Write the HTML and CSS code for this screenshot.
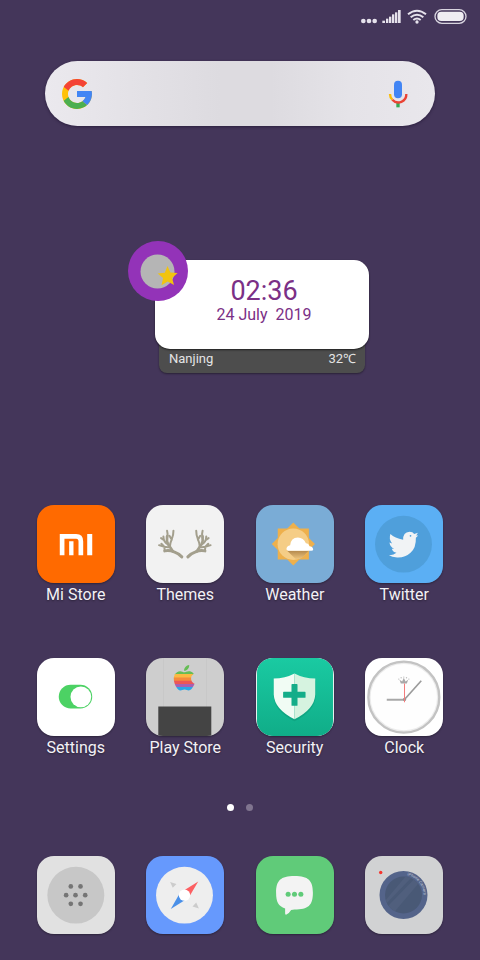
FILE: index.html
```html
<!DOCTYPE html>
<html lang="en">
<head>
<meta charset="utf-8">
<meta name="viewport" content="width=device-width, initial-scale=1">
<title>Home</title>
<link rel="stylesheet" href="styles.css">
</head>
<body>
<div class="home">
  <header class="status">
    <svg width="16" height="15" viewBox="65 27 48 45" aria-hidden="true"><g fill="#e6e2ec"><circle cx="72" cy="63" r="7"/><circle cx="89" cy="63" r="7"/><circle cx="106" cy="63" r="7"/></g></svg>
    <svg width="20" height="15" viewBox="128 27 60 45" aria-hidden="true"><g fill="#e6e2ec"><rect x="129" y="62" width="8" height="7"/><rect x="140" y="56" width="7" height="13"/><rect x="149" y="50" width="7" height="19"/><rect x="158" y="43" width="7" height="26"/><rect x="167" y="37" width="7" height="32"/><rect x="176" y="30" width="8" height="39"/></g></svg>
    <svg class="wifi" width="20" height="15" viewBox="203 27 60 45" aria-hidden="true"><g fill="none" stroke="#e6e2ec" stroke-width="6"><path d="M206 43Q233 21 260 43"/><path d="M214 52Q233 36 252 52"/><path d="M222 60Q233 51 244 60"/></g><circle cx="233" cy="66" r="5" fill="#e6e2ec"/></svg>
    <svg width="33" height="15" viewBox="283 27 99 45" aria-hidden="true"><rect x="286" y="29" width="93" height="41" rx="20.500" fill="none" stroke="#d8d4df" stroke-width="4"/><rect x="293" y="35" width="79" height="28" rx="12" fill="#efedf2"/></svg>
  </header>

  <form class="search">
    <svg width="36" height="36" viewBox="0 0 48 48" aria-hidden="true">
      <path fill="#ffc107" d="M43.611 20.083H42V20H24v8h11.303c-1.649 4.657-6.08 8-11.303 8c-6.627 0-12-5.373-12-12c0-6.627 5.373-12 12-12c3.059 0 5.842 1.154 7.961 3.039l5.657-5.657C34.046 6.053 29.268 4 24 4C12.955 4 4 12.955 4 24c0 11.045 8.955 20 20 20c11.045 0 20-8.955 20-20C44 22.659 43.862 21.35 43.611 20.083z"/>
      <path fill="#f44336" d="M6.306 14.691l6.571 4.819C14.655 15.108 18.961 12 24 12c3.059 0 5.842 1.154 7.961 3.039l5.657-5.657C34.046 6.053 29.268 4 24 4C16.318 4 9.656 8.337 6.306 14.691z"/>
      <path fill="#4caf50" d="M24 44c5.166 0 9.86-1.977 13.409-5.192l-6.19-5.238C29.211 35.091 26.715 36 24 36c-5.202 0-9.619-3.317-11.283-7.946l-6.522 5.025C9.505 39.556 16.227 44 24 44z"/>
      <path fill="#4285f4" d="M43.611 20.083H42V20H24v8h11.303c-.792 2.237-2.231 4.166-4.087 5.571l6.193 5.236C36.971 39.205 44 34 44 24C44 22.659 43.862 21.35 43.611 20.083z"/>
    </svg>
    <input class="search-input" type="search" aria-label="Search">
    <button class="mic" type="button" aria-label="Voice search">
      <svg width="20" height="28" viewBox="144 90 60 84" aria-hidden="true">
        <rect x="162" y="92" width="24" height="53" rx="12" fill="#4285f4"/>
        <rect x="169" y="156" width="10" height="16" fill="#34a853"/>
        <path d="M150 132A24 24 0 0 0 157 149" fill="none" stroke="#fbbc05" stroke-width="7"/>
        <path d="M157 149A24 24 0 0 0 199 132" fill="none" stroke="#ea4335" stroke-width="7"/>
      </svg>
    </button>
  </form>

  <section class="widget">
    <div class="card">
      <div class="time">02:36</div>
      <div class="date">24 July  2019</div>
    </div>
    <div class="weather"><span>Nanjing</span><span>32℃</span></div>
    <svg class="badge" width="60" height="60" viewBox="0 0 60 60" aria-hidden="true"><circle cx="30" cy="30" r="30" fill="#9333b8"/><circle cx="29.500" cy="30.500" r="17" fill="#b5b5b5"/><path d="M39.500 25l2.900 6.500 7.200.5-5.500 4.900 1.900 7-6.300-3.400-6.200 3.800 1.600-7.300-5.400-4.500 7.100-.7z" fill="#f1c40f"/></svg>
  </section>

  <main class="apps">
    <a class="app" href="#">
      <svg class="icon" viewBox="22 30 233 233" aria-hidden="true"><rect x="22" y="30" width="233" height="233" fill="#ff6a00"/><path d="M97 180V124H139Q153 124 153 139V180" fill="none" stroke="#fff" stroke-width="14"/><path d="M118 138h13v42h-13zM172 117h15v63h-15z" fill="#fff"/></svg>
      <span>Mi Store</span>
    </a>
    <a class="app" href="#">
      <svg class="icon" viewBox="350 30 233 233" aria-hidden="true"><rect x="350" y="30" width="233" height="233" fill="#f2f2f2"/>
        <defs><g id="antler" fill="none" stroke="#a39f8d" stroke-linecap="round" stroke-linejoin="round"><path d="M457 185Q446 174 434 170Q420 164 406 167" stroke-width="9"/><path d="M430 168Q424 158 416 147Q411 138 413 124" stroke-width="8"/><path d="M413 128Q416 115 413 107M421 156Q422 143 427 132Q432 121 432 107M427 134L420 122M416 148Q402 140 402 124M404 135L395 129M420 156Q404 157 389 150M404 154L396 146M406 166L405 158" stroke-width="6"/></g></defs>
        <use href="#antler"/><use href="#antler" transform="translate(932 0) scale(-1 1)"/></svg>
      <span>Themes</span>
    </a>
    <a class="app" href="#">
      <svg class="icon" viewBox="33 30 233 233" aria-hidden="true"><defs><linearGradient id="shade" x1="0" y1="0" x2="0" y2="1"><stop offset="0" stop-color="#b58a4d"/><stop offset="1" stop-color="#efc67e"/></linearGradient></defs><rect x="33" y="30" width="233" height="233" fill="#7aacd6"/><path d="M98 100h93v93H98z" fill="#eeb04c"/><path d="M144.500 82L209 146.500 144.500 211 80 146.500z" fill="#eeb04c"/><circle cx="144.500" cy="147" r="47" fill="#f5cd86"/><path d="M126 167H190L183 174Q170 194 152 192z" fill="url(#shade)"/><path d="M133 167Q124 167 124 161Q125 152 135 150Q137 128 158 127Q175 128 182 144Q190 144 193 153Q202 153 204 162Q204 167 198 167z" fill="#fff"/></svg>
      <span>Weather</span>
    </a>
    <a class="app" href="#">
      <svg class="icon" viewBox="361 30 233 233" aria-hidden="true"><rect x="361" y="30" width="233" height="233" fill="#5baff4"/><circle cx="476" cy="147" r="85" fill="#4f9fdb"/><path d="M437 117Q450 130 475 134Q474 112 494 110Q504 110 508 117L519 113L514 121L520 121L513 128Q514 158 497 173Q481 188 457 187Q442 186 432 180Q446 181 455 173Q444 171 441 161L448 161Q436 155 434 142L442 145Q431 132 437 117z" fill="#f1f3f5"/><circle cx="497" cy="122" r="2.500" fill="#4f9fdb"/></svg>
      <span>Twitter</span>
    </a>
    <a class="app" href="#">
      <svg class="icon" viewBox="22 25 233 233" aria-hidden="true"><rect x="22" y="25" width="233" height="233" fill="#fff"/><rect x="87" y="105" width="100" height="71" rx="35.500" fill="#4cd264"/><circle cx="153" cy="141" r="31" fill="#fff"/></svg>
      <span>Settings</span>
    </a>
    <a class="app" href="#">
      <svg class="icon" viewBox="0 0 78 78" aria-hidden="true"><defs><clipPath id="fruit"><path transform="translate(25.400 7) scale(1.060)" d="M12.152 6.896c-.948 0-2.415-1.078-3.96-1.04-2.04.027-3.91 1.183-4.961 3.014-2.117 3.675-.546 9.103 1.519 12.09 1.013 1.454 2.208 3.09 3.792 3.039 1.52-.065 2.09-.987 3.935-.987 1.831 0 2.35.987 3.96.948 1.637-.026 2.676-1.48 3.676-2.948 1.156-1.688 1.636-3.325 1.662-3.415-.039-.013-3.182-1.221-3.22-4.857-.026-3.04 2.48-4.494 2.597-4.559-1.429-2.09-3.623-2.324-4.39-2.376-2-.156-3.675 1.09-4.61 1.09zM15.53 3.83c.843-1.012 1.4-2.427 1.245-3.83-1.207.052-2.662.805-3.532 1.818-.78.896-1.454 2.338-1.273 3.714 1.338.104 2.715-.688 3.559-1.701"/></clipPath></defs><rect width="78" height="78" fill="#cecece"/><path d="M17 0h1v49h-1zM60 0h1v49h-1z" fill="#c8c8c8"/><rect x="12.300" y="48.500" width="53" height="30" fill="#444"/><g clip-path="url(#fruit)"><path d="M25 6h26v11H25z" fill="#65bd55"/><path d="M25 16h26v4H25z" fill="#fbb943"/><path d="M25 19.500h26v3.500H25z" fill="#f58b3c"/><path d="M25 22.700h26v3.500H25z" fill="#ec5656"/><path d="M25 26h26v3H25z" fill="#a85fb2"/><path d="M25 29h26v5H25z" fill="#29a6e8"/></g></svg>
      <span>Play Store</span>
    </a>
    <a class="app" href="#">
      <svg class="icon" viewBox="33 25 233 233" aria-hidden="true"><defs><linearGradient id="green" x1="0" y1="0" x2="0" y2="1"><stop offset="0" stop-color="#1acaa2"/><stop offset="1" stop-color="#10ad88"/></linearGradient></defs><rect x="33" y="25" width="233" height="233" fill="#e4f3ef"/><rect x="36" y="25" width="227" height="233" rx="44" fill="url(#green)"/><path d="M148 78Q176 92 211 92V140Q209 184 148 214Q88 184 86 140V92Q120 92 148 78z" fill="#0c9474" opacity=".450"/><path d="M148 71Q120 86 86 86V134Q88 178 148 208z" fill="#f1fcf4"/><path d="M148 71Q176 86 210 86V134Q208 178 148 208z" fill="#d6f3e0"/><path d="M141 103h14q2 0 2 2v21h22q2 0 2 2v14q0 2-2 2h-22v22q0 2-2 2h-14q-2 0-2-2v-22h-23q-2 0-2-2v-14q0-2 2-2h23v-21q0-2 2-2z" fill="#14ad89"/></svg>
      <span>Security</span>
    </a>
    <a class="app" href="#">
      <svg class="icon" viewBox="361 25 233 233" aria-hidden="true"><rect x="361" y="25" width="233" height="233" fill="#fff"/><circle cx="477" cy="142" r="103" fill="#fefefe" stroke="#ececec" stroke-width="8"/><circle cx="477" cy="142" r="106" fill="none" stroke="#c3c3c3" stroke-width="7"/><path d="M468 101L464 90L472 95L477 84L482 95L490 90L486 101z" fill="#aaa"/><g fill="#bbb"><circle cx="462" cy="88" r="2"/><circle cx="469" cy="84" r="2"/><circle cx="477" cy="82" r="2"/><circle cx="485" cy="84" r="2"/><circle cx="492" cy="88" r="2"/></g><path d="M426 149.500H479" stroke="#a8a8a8" stroke-width="6"/><path d="M479 149L529 93" stroke="#9b9b9b" stroke-width="5"/><circle cx="479" cy="149" r="5" fill="#999"/><path d="M479 101V157" stroke="#f47c7c" stroke-width="3"/></svg>
      <span>Clock</span>
    </a>
  </main>

  <div class="pages" aria-hidden="true"><i class="dot active"></i><i class="dot"></i></div>

  <nav class="dock">
    <a class="app" href="#" aria-label="Phone"><svg class="icon" viewBox="22 200 233 233" aria-hidden="true"><rect x="22" y="200" width="233" height="233" fill="#e1e1e1"/><circle cx="138" cy="317" r="85" fill="#c7c7c7"/><g fill="#757575"><circle cx="123" cy="291" r="7"/><circle cx="152" cy="291" r="7"/><circle cx="109" cy="317" r="7"/><circle cx="137" cy="317" r="7"/><circle cx="166" cy="317" r="7"/><circle cx="123" cy="343" r="7"/><circle cx="152" cy="343" r="7"/></g></svg></a>
    <a class="app" href="#" aria-label="Browser"><svg class="icon" viewBox="350 200 233 233" aria-hidden="true"><rect x="350" y="200" width="233" height="233" fill="#6699fd"/><circle cx="465" cy="317" r="85" fill="#eee"/><path d="M422 278L441 284L430 295zM508 357L489 351L500 339z" fill="#ccc"/><path d="M506 276L463 303L480 320z" fill="#fc5f62"/><path d="M424 358L450 313L468 331z" fill="#4a90e8"/><circle cx="465" cy="317" r="17" fill="#fff"/></svg></a>
    <a class="app" href="#" aria-label="Messages"><svg class="icon" viewBox="33 200 233 233" aria-hidden="true"><rect x="33" y="200" width="233" height="233" fill="#60cb79"/><path d="M148 260C190 260 203 274 203 310C203 348 189 360 148 360L138 361Q131 372 124 375Q119 376 120 370V357C100 350 93 338 93 310C93 274 106 260 148 260z" fill="#f3f3f3"/><g fill="#60cb79"><circle cx="129" cy="314" r="7.500"/><circle cx="148" cy="314" r="7.500"/><circle cx="167" cy="314" r="7.500"/></g></svg></a>
    <a class="app" href="#" aria-label="Camera"><svg class="icon" viewBox="0 0 78 78" aria-hidden="true"><defs><clipPath id="lens"><circle cx="38.500" cy="39" r="18.500"/></clipPath><path id="rim" d="M18.500 39A20 20 0 0 1 58.500 39A20 20 0 0 1 38.500 59"/></defs><rect width="78" height="78" fill="#d1d2d3"/><circle cx="15.700" cy="16.500" r="1.700" fill="#f5362e"/><circle cx="38.500" cy="39" r="24" fill="#54648a"/><circle cx="38.500" cy="39" r="18.500" fill="#495976"/><g clip-path="url(#lens)"><path d="M14 52L46 14L58 22L26 60z" fill="#505f7d"/><path d="M21 50L52 18" stroke="#495976" stroke-width="3"/></g><text class="rim-text"><textPath href="#rim" startOffset="35">iPhone Camera</textPath></text></svg></a>
  </nav>
</div>
</body>
</html>
```
FILE: styles.css
```css
* { box-sizing: border-box; }

body {
  margin: 0;
  background: #44365a;
  font-family: Roboto, "Noto Sans", "Noto Sans CJK SC", sans-serif;
  color: #f3f1f6;
}

svg { display: block; }

.home {
  display: flex;
  flex-direction: column;
  min-height: 100vh;
}

.status {
  display: flex;
  justify-content: flex-end;
  align-items: center;
  gap: 5px;
  padding: 9px 13px 0 0;
}

.wifi { margin-right: 2px; }

.search {
  display: flex;
  align-items: center;
  height: 65px;
  margin: 37px 45px 0;
  padding: 0 27px 0 14px;
  border-radius: 33px;
  background: linear-gradient(90deg, #ebe9ee 0%, #e3e1e6 25%, #dddbe0 45%, #dddbe0 58%, #e5e3e8 78%, #e9e7ec 100%);
  box-shadow: 0 1px 3px rgba(20, 10, 35, 0.5);
}

.search-input {
  flex: 1;
  min-width: 0;
  border: 0;
  outline: 0;
  background: none;
  font: inherit;
}

.mic {
  padding: 0;
  border: 0;
  background: none;
}

.widget {
  position: relative;
  align-self: center;
  width: 214px;
  margin: 134px 0 0 44px;
}

.card {
  position: relative;
  z-index: 1;
  height: 89px;
  padding: 16px 0 0 4px;
  border-radius: 15px;
  background: #fff;
  box-shadow: 0 1px 2px rgba(0, 0, 0, 0.6);
  color: #7b3086;
  text-align: center;
}

.time {
  font-size: 27px;
  line-height: 31px;
}

.date {
  font-size: 16px;
  line-height: 16px;
  white-space: pre;
}

.weather {
  display: flex;
  justify-content: space-between;
  margin: -12px 4px 0;
  padding: 12px 9px 4px 10px;
  border-radius: 8px;
  background: #4d4d4d;
  box-shadow: 0 1px 2px rgba(0, 0, 0, 0.4);
  color: #e4e4e4;
  font-size: 13px;
  line-height: 20px;
}

.badge {
  position: absolute;
  z-index: 2;
  top: -19px;
  left: -27px;
}

.apps,
.dock {
  display: grid;
  grid-template-columns: repeat(4, 1fr);
  row-gap: 51px;
  padding: 0 21px;
}

.apps { margin-top: 132px; }

.app {
  display: flex;
  flex-direction: column;
  align-items: center;
  color: inherit;
  font-size: 16px;
  line-height: 24px;
  text-decoration: none;
  text-shadow: 0 1px 2px rgba(0, 0, 0, 0.4);
}

.icon {
  width: 78px;
  height: 78px;
  border-radius: 17px;
  box-shadow: 0 1px 2px rgba(0, 0, 0, 0.35);
}

.pages {
  display: flex;
  justify-content: center;
  gap: 12px;
  margin: 44px 0 45px;
}

.dot {
  width: 7px;
  height: 7px;
  border-radius: 50%;
  background: #80758f;
}

.dot.active { background: #fff; }

.dock { padding-bottom: 25px; }

.rim-text {
  fill: #c3cad8;
  font-size: 4px;
  text-shadow: none;
}
```
